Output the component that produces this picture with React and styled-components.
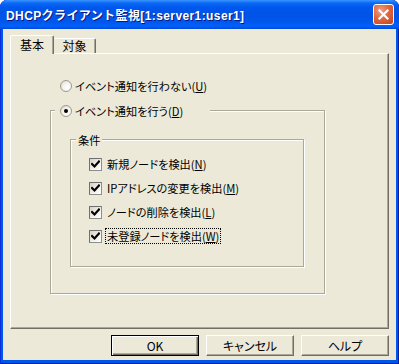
import React from 'react';
import styled, { createGlobalStyle } from 'styled-components';

const Global = createGlobalStyle`
  html, body { margin: 0; padding: 0; background: #ffffff; }
  body { font-family: "Noto Sans CJK JP", "Liberation Sans", sans-serif; }
  * { box-sizing: border-box; }
`;

const Window = styled.div`
  width: 399px;
  height: 364px;
  display: flex;
  flex-direction: column;
  background: #0055ea;
  box-shadow: inset 1px 0 0 #0831d9, inset -1px 0 0 #001ea0, inset 0 -1px 0 #001ea0;
  border-radius: 7px 7px 0 0;
  overflow: hidden;
`;

const TitleBar = styled.div`
  height: 29px;
  flex: none;
  display: flex;
  align-items: center;
  justify-content: space-between;
  padding: 0 5px 0 6px;
  background: linear-gradient(
    to bottom,
    #3d95ff 0px,
    #0a6af5 3px,
    #0058ee 7px,
    #0053e6 14px,
    #0057ec 22px,
    #0062fb 26px,
    #0048d8 29px
  );
  border-radius: 7px 7px 0 0;
`;

const Title = styled.span`
  color: #ffffff;
  font-family: "Liberation Sans", "Noto Sans CJK JP", sans-serif;
  font-weight: bold;
  font-size: 12px;
  letter-spacing: 0.4px;
  text-shadow: 1px 1px 0 #0a1883;
  white-space: nowrap;
`;

const CloseButton = styled.div`
  width: 21px;
  height: 21px;
  border: 1px solid #ffffff;
  border-radius: 3px;
  background: radial-gradient(circle at 35% 30%, #f0a080 0%, #e2663f 45%, #c4401c 100%);
  display: flex;
  align-items: center;
  justify-content: center;
`;

const Body = styled.div`
  flex: 1;
  margin: 0 3px 4px 3px;
  background: #ece9d8;
  padding: 6px 7px 4px 7px;
  display: flex;
  flex-direction: column;
  font-size: 11.2px;
  color: #000;
  font-feature-settings: "palt";
`;

const TabStrip = styled.div`
  height: 18px;
  display: flex;
  align-items: flex-end;
  flex: none;
`;

const Tab = styled.div`
  position: relative;
  z-index: ${p => (p.$active ? 1 : 0)};
  width: ${p => p.$w}px;
  height: ${p => (p.$active ? 19 : 15)}px;
  margin-bottom: ${p => (p.$active ? -1 : 0)}px;
  background: #ece9d8;
  border-top: 1px solid #ffffff;
  border-left: ${p => (p.$active ? '1px solid #ffffff' : 'none')};
  border-right: 1px solid #716f64;
  box-shadow: inset -1px 0 0 #aca899;
  border-radius: 2px 2px 0 0;
  display: flex;
  justify-content: center;
  align-items: ${p => (p.$active ? 'flex-start' : 'center')};
  padding-top: ${p => (p.$active ? 1 : 0)}px;
  font-size: 12px;
  line-height: 16px;
`;

const Panel = styled.div`
  height: 276px;
  flex: none;
  border-top: 1px solid #ffffff;
  border-left: 1px solid #ffffff;
  border-right: 1px solid #716f64;
  border-bottom: 1px solid #716f64;
  box-shadow: inset -1px -1px 0 #aca899;
  padding: 24px 0 0 39px;
  display: flex;
  flex-direction: column;
`;

const OptionRow = styled.div`
  height: 16px;
  display: flex;
  align-items: center;
  gap: 3px;
  line-height: 16px;
  white-space: nowrap;
  margin-left: ${p => p.$indent || 0}px;
`;

const RadioCircle = styled.span`
  width: 12px;
  height: 12px;
  flex: none;
  border-radius: 50%;
  border: 1px solid #9c9a8f;
  background: radial-gradient(circle at 65% 65%, #ffffff 0%, #f4f3ee 45%, #d6d3c7 100%);
  display: flex;
  align-items: center;
  justify-content: center;
  &::after {
    content: '';
    width: 4px;
    height: 4px;
    border-radius: 50%;
    background: ${p => (p.$checked ? '#000' : 'transparent')};
  }
`;

const CheckBox = styled.span`
  width: 13px;
  height: 13px;
  flex: none;
  border: 1px solid #8e8f8f;
  border-top-color: #707070;
  border-left-color: #707070;
  background: linear-gradient(135deg, #d4d1c6 0%, #f0efe8 55%, #ffffff 100%);
  display: flex;
  align-items: center;
  justify-content: center;
`;

const Label = styled.span`
  padding: 0 1px;
  border: 1px dotted ${p => (p.$focused ? '#000' : 'transparent')};
  line-height: 14px;
`;

const Key = styled.span`
  text-decoration: underline;
  text-underline-offset: 1px;
`;

const GroupBox = styled.div`
  width: ${p => p.$w}px;
  height: ${p => p.$h}px;
  margin-top: ${p => p.$mt}px;
  margin-left: ${p => p.$ml || 0}px;
  flex: none;
  border: 1px solid #aca899;
  box-shadow: inset 1px 1px 0 #ffffff, 1px 1px 0 #ffffff;
  display: flex;
  flex-direction: column;
`;

const Legend = styled.div`
  margin-top: -8px;
  margin-left: ${p => p.$ml}px;
  width: ${p => (p.$w ? p.$w + 'px' : 'auto')};
  align-self: flex-start;
  height: 16px;
  background: #ece9d8;
  padding: 0 ${p => p.$px}px;
  display: flex;
  align-items: center;
  gap: 3px;
  line-height: 16px;
  white-space: nowrap;
`;

const CheckList = styled.div`
  display: flex;
  flex-direction: column;
  gap: 8px;
  margin-top: 8px;
  padding-left: 18px;
`;

const ButtonRow = styled.div`
  margin-top: 6px;
  height: 21px;
  flex: none;
  display: flex;
  justify-content: flex-end;
  gap: 7px;
`;

const Button = styled.div`
  width: 88px;
  height: 21px;
  display: flex;
  align-items: center;
  justify-content: center;
  background: #ece9d8;
  border-top: 1px solid ${p => (p.$default ? '#000' : '#fff')};
  border-left: 1px solid ${p => (p.$default ? '#000' : '#fff')};
  border-right: 1px solid ${p => (p.$default ? '#000' : '#716f64')};
  border-bottom: 1px solid ${p => (p.$default ? '#000' : '#716f64')};
  box-shadow: ${p =>
    p.$default
      ? 'inset 1px 1px 0 #ffffff, inset -1px -1px 0 #716f64, inset -2px -2px 0 #aca899'
      : 'inset -1px -1px 0 #aca899'};
  font-size: 12px;
  line-height: 14px;
  padding-top: 1px;
`;

const Check = () => (
  <svg width="9" height="9" viewBox="0 0 9 9">
    <path d="M1 4 L3.5 6.5 L8 1.5" stroke="#000" strokeWidth="2.2" fill="none" strokeLinecap="square" />
  </svg>
);

const CloseX = () => (
  <svg width="13" height="13" viewBox="0 0 13 13">
    <path d="M2.5 2.5 L10.5 10.5 M10.5 2.5 L2.5 10.5" stroke="#ffffff" strokeWidth="2.2" strokeLinecap="square" />
  </svg>
);

const checks = [
  { text: '新規ノードを検出(', key: 'N' },
  { text: 'IPアドレスの変更を検出(', key: 'M' },
  { text: 'ノードの削除を検出(', key: 'L' },
  { text: '未登録ノードを検出(', key: 'W', focused: true },
];

export default function App() {
  return (
    <>
      <Global />
      <Window>
        <TitleBar>
          <Title>DHCPクライアント監視[1:server1:user1]</Title>
          <CloseButton>
            <CloseX />
          </CloseButton>
        </TitleBar>
        <Body>
          <TabStrip>
            <Tab $active $w={44}>基本</Tab>
            <Tab $w={42}>対象</Tab>
          </TabStrip>
          <Panel>
            <OptionRow $indent={10}>
              <RadioCircle />
              <span>イベント通知を行わない(<Key>U</Key>)</span>
            </OptionRow>
            <GroupBox $w={275} $h={184} $mt={16}>
              <Legend $ml={4} $w={155} $px={5}>
                <RadioCircle $checked />
                <span>イベント通知を行う(<Key>D</Key>)</span>
              </Legend>
              <GroupBox $w={234} $h={128} $mt={20} $ml={19}>
                <Legend $ml={5} $px={2}>条件</Legend>
                <CheckList>
                  {checks.map(c => (
                    <OptionRow key={c.key}>
                      <CheckBox>
                        <Check />
                      </CheckBox>
                      <Label $focused={c.focused}>
                        {c.text}
                        <Key>{c.key}</Key>)
                      </Label>
                    </OptionRow>
                  ))}
                </CheckList>
              </GroupBox>
            </GroupBox>
          </Panel>
          <ButtonRow>
            <Button $default>OK</Button>
            <Button>キャンセル</Button>
            <Button>ヘルプ</Button>
          </ButtonRow>
        </Body>
      </Window>
    </>
  );
}
